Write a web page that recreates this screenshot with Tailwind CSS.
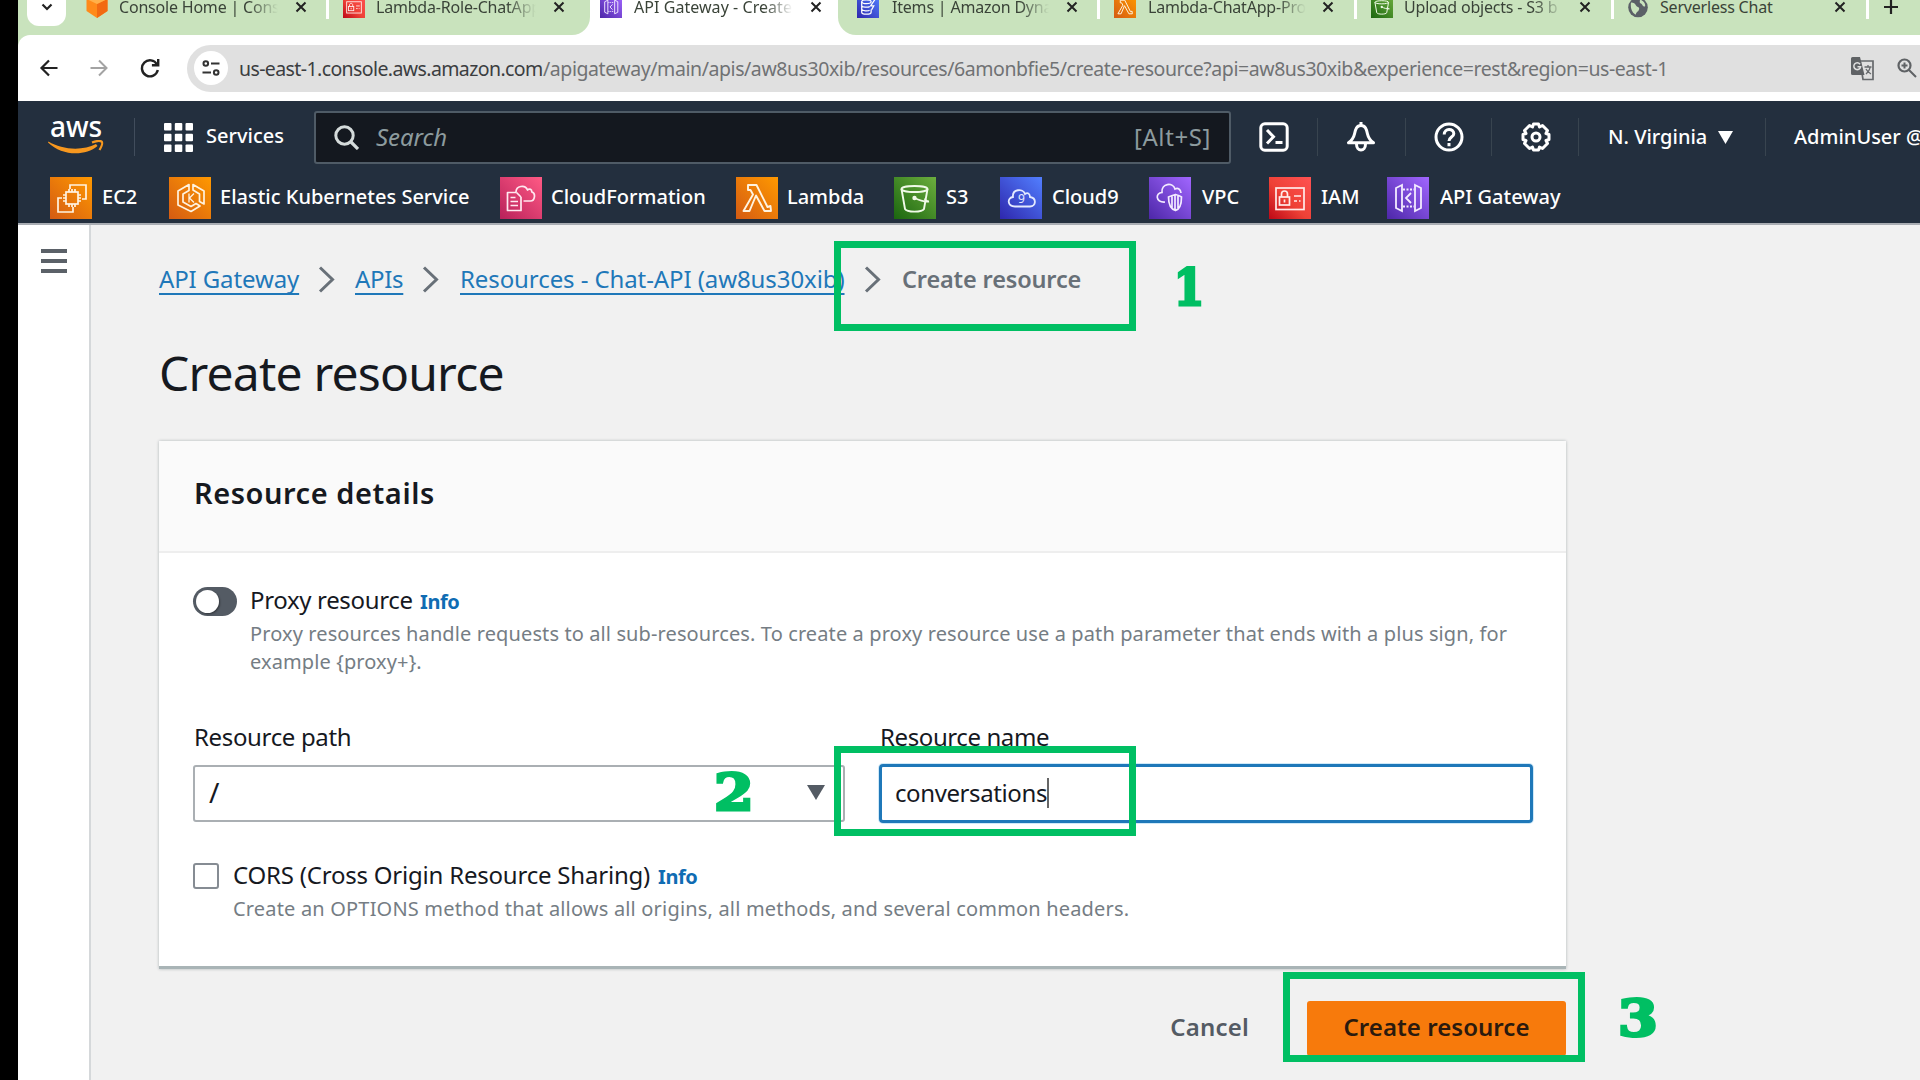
<!DOCTYPE html>
<html lang="en">
<head>
<meta charset="utf-8">
<title>API Gateway - Create resource</title>
<script src="https://cdn.jsdelivr.net/npm/@tailwindcss/browser@4"></script>
</head>
<body class="relative h-[1080px] w-[1920px] overflow-hidden bg-black pl-[18px] font-['Noto_Sans',sans-serif] text-[#16191f]">

<!-- Icon library -->
<svg class="absolute size-0" xmlns="http://www.w3.org/2000/svg">
  <defs>
    <linearGradient id="gOrange" x1="0" y1="1" x2="1" y2="0"><stop offset="0" stop-color="#d45b13"/><stop offset="1" stop-color="#ff9900"/></linearGradient>
    <linearGradient id="gPink" x1="0" y1="1" x2="1" y2="0"><stop offset="0" stop-color="#b8215a"/><stop offset="1" stop-color="#ff5a85"/></linearGradient>
    <linearGradient id="gGreen" x1="0" y1="1" x2="1" y2="0"><stop offset="0" stop-color="#1b660f"/><stop offset="1" stop-color="#6cae3e"/></linearGradient>
    <linearGradient id="gBlue" x1="0" y1="1" x2="1" y2="0"><stop offset="0" stop-color="#2e27ad"/><stop offset="1" stop-color="#527fff"/></linearGradient>
    <linearGradient id="gPurple" x1="0" y1="1" x2="1" y2="0"><stop offset="0" stop-color="#4d27a8"/><stop offset="1" stop-color="#a166ff"/></linearGradient>
    <linearGradient id="gRed" x1="0" y1="1" x2="1" y2="0"><stop offset="0" stop-color="#bd0816"/><stop offset=".45" stop-color="#ee4136"/><stop offset="1" stop-color="#ff5252"/></linearGradient>
  </defs>
  <symbol id="ec2" viewBox="0 0 42 42"><rect width="42" height="42" fill="url(#gOrange)"/><g fill="none" stroke="#fff3e0" stroke-width="1.7"><path d="M20 12V8h16v14h-4M12 21H8v14h15v-5"/><rect x="16" y="15" width="12" height="12"/><path d="M19 15v-3M22 15v-3M25 15v-3M19 27v3M22 27v3M25 27v3M16 18h-3M16 21h-3M16 24h-3M28 18h3M28 21h3M28 24h3"/></g></symbol>
  <symbol id="eks" viewBox="0 0 42 42"><rect width="42" height="42" fill="url(#gOrange)"/><g fill="none" stroke="#fff3e0" stroke-width="1.7" stroke-linejoin="round"><path d="M20 7.500L9 14v14l13 6.500 9-5.500-4-2.500-5 3-8-4.500v-8l6-3.500zM24 7.500L35 14v13l-4.500-2.500V17L24 13z"/><path d="M20 16.500v9M25 16.500l-4.500 4.500 4.500 4.500" stroke-width="1.300"/></g></symbol>
  <symbol id="cfn" viewBox="0 0 42 42"><rect width="42" height="42" fill="url(#gPink)"/><g fill="none" stroke="#ffe9f0" stroke-width="1.700" stroke-linejoin="round"><path d="M16.500 15.500H7.500v18h13.500V20M16.500 15.500l4.500 4.500M10.500 20.500h5M10.500 24.500h7.500M10.500 28.500h7.500M16 15c0-6 9-8 11.500-2 2-2 4.500-.5 4.300 2 4.200 1 3.200 9-1.300 9h-7"/></g></symbol>
  <symbol id="lambda" viewBox="0 0 42 42"><rect width="42" height="42" fill="url(#gOrange)"/><path d="M12 8h8.500l11 22 3-1 .5 5h-6.500L20 18.500 13.500 34H7.500L17 17.500 14.500 13H12z" fill="none" stroke="#fff3e0" stroke-width="1.900" stroke-linejoin="round"/></symbol>
  <symbol id="s3" viewBox="0 0 42 42"><rect width="42" height="42" fill="url(#gGreen)"/><g fill="none" stroke="#f0fae8" stroke-width="1.900"><ellipse cx="20.500" cy="12" rx="13" ry="3"/><path d="M7.500 12l3.500 20c2 3.500 17 3.500 19 0l3.500-20M20.500 21c4 2 10 4 14.500 3.500-2 0-3.500-2-4.500-3"/></g><circle cx="20.500" cy="21" r="2.200" fill="#f0fae8"/></symbol>
  <symbol id="cloud9" viewBox="0 0 42 42"><rect width="42" height="42" fill="url(#gBlue)"/><path d="M15 29.500c-8 0-8-9-2-9.500-1-8 10-9 12-3 3-2 5 0 5 3 7 1 6 9.500 0 9.500z" fill="none" stroke="#e4eaff" stroke-width="1.800"/><text x="21.500" y="26" font-size="12" font-weight="400" text-anchor="middle" fill="#e4eaff">9</text></symbol>
  <symbol id="vpc" viewBox="0 0 42 42"><rect width="42" height="42" fill="url(#gPurple)"/><g fill="none" stroke="#f3ebff" stroke-width="1.700"><path d="M16 25c-9.500.5-10-9-3-9.500C12 6 24 5 26 12c3-1.500 5.500 0 6 4"/><path d="M19.500 20c3-1.500 5-2 7-2.500 2 .5 4 1 6 2.500 0 7-1 12-6 13.500-5-1.500-7-6.500-7-13.500zM26 17.500V33M29 19v12M23 19v12"/></g></symbol>
  <symbol id="iam" viewBox="0 0 42 42"><rect width="42" height="42" fill="url(#gRed)"/><g fill="none" stroke="#ffecea" stroke-width="1.700"><rect x="7" y="11" width="28" height="21.500"/><rect x="10.500" y="20" width="10" height="8"/><path d="M12.500 20v-3c0-4 6-4 6 0v3M15.500 22.500v3M25 19h7M25 24h3M30 24h1.500"/></g></symbol>
  <symbol id="apigw" viewBox="0 0 42 42"><rect width="42" height="42" fill="url(#gPurple)"/><g fill="none" stroke="#f3ebff" stroke-width="1.800"><path d="M15 8l-6 3v20l6 3zM28 8l6 3v20l-6 3zM24 16l-5 5 5 5"/><path d="M16 12.500h11M16 29.500h11" stroke-dasharray="2 1.500"/></g></symbol>
  <symbol id="dynamo" viewBox="0 0 42 42"><rect width="42" height="42" fill="url(#gBlue)"/><g fill="none" stroke="#fff" stroke-width="2.400"><ellipse cx="18" cy="11" rx="9" ry="3.500"/><path d="M9 11v20c0 5 18 5 18 0v-5M9 18c0 4 13 4 15 2M9 25c0 4 13 4 15 2M34 7l-8 12h6l-4 7"/></g></symbol>
  <symbol id="close" viewBox="0 0 14 14"><path d="M2.500 2.500l9 9M11.500 2.500l-9 9" stroke="#222" stroke-width="2" fill="none"/></symbol>
  <symbol id="chev" viewBox="0 0 17 27"><path d="M2 1.500l12.500 12L2 25.500" fill="none" stroke="#687078" stroke-width="3"/></symbol>
</svg>

<div class="flex h-full w-[1902px] flex-col overflow-hidden bg-white">

  <!-- Browser tab strip -->
  <div class="relative h-[35px] shrink-0 bg-[#c9e3bd]">
    <div class="absolute left-[552px] top-0 h-[35px] w-[286px] bg-white"></div>
    <div class="absolute left-[522px] top-0 h-[35px] w-[50px] rounded-br-[18px] bg-[#c9e3bd]"></div>
    <div class="absolute left-[820px] top-0 h-[35px] w-[60px] rounded-bl-[18px] bg-[#c9e3bd]"></div>
    <div class="relative flex h-[14px] items-center whitespace-nowrap text-[16px] leading-[14px] tracking-[-0.2px] text-[#3a4338]">
      <div class="ml-[9px] mr-[6px] flex h-[38px] w-[39px] shrink-0 items-center justify-center rounded-[12px] bg-white"><svg class="h-[10px] w-[12px]" viewBox="0 0 12 10"><path d="M1.500 2.500L6 7l4.500-4.500" fill="none" stroke="#222" stroke-width="2.200"/></svg></div>
      <div class="flex w-[257px] shrink-0 items-center pl-[14px]">
        <svg class="h-[24px] w-[22px] shrink-0 -translate-y-px" viewBox="0 0 22 24"><path d="M11 0l10.500 5v12L11 24 .5 17V5z" fill="#ff8a1a"/><path d="M11 10l10.500-5v12L11 24z" fill="#f26a12"/><path d="M11 0l10.500 5L11 10 .5 5z" fill="#ffb04a"/></svg>
        <span class="ml-[11px] w-[160px] overflow-hidden py-1 [mask-image:linear-gradient(to_right,black_82%,transparent)]">Console Home | Cons</span>
        <svg class="ml-[16px] size-[14px] shrink-0"><use href="#close"/></svg>
        <i class="ml-[18px] h-[24px] w-[3px] shrink-0 bg-white"></i>
      </div>
      <div class="flex w-[257px] shrink-0 items-center pl-[14px]">
        <svg class="size-[22px] shrink-0"><use href="#iam"/></svg>
        <span class="ml-[11px] w-[160px] overflow-hidden py-1 [mask-image:linear-gradient(to_right,black_82%,transparent)]">Lambda-Role-ChatApp</span>
        <svg class="ml-[16px] size-[14px] shrink-0"><use href="#close"/></svg>
      </div>
      <div class="flex w-[257px] shrink-0 items-center pl-[14px]">
        <svg class="size-[22px] shrink-0"><use href="#apigw"/></svg>
        <span class="ml-[12px] w-[159px] overflow-hidden py-1 tracking-[0.050px] [mask-image:linear-gradient(to_right,black_82%,transparent)]">API Gateway - Create r</span>
        <svg class="ml-[16px] size-[14px] shrink-0"><use href="#close"/></svg>
      </div>
      <div class="flex w-[257px] shrink-0 items-center pl-[14px]">
        <svg class="size-[22px] shrink-0"><use href="#dynamo"/></svg>
        <span class="ml-[13px] w-[158px] overflow-hidden py-1 [mask-image:linear-gradient(to_right,black_82%,transparent)]">Items | Amazon Dynam</span>
        <svg class="ml-[16px] size-[14px] shrink-0"><use href="#close"/></svg>
        <i class="ml-[18px] h-[24px] w-[3px] shrink-0 bg-white"></i>
      </div>
      <div class="flex w-[257px] shrink-0 items-center pl-[14px]">
        <svg class="size-[22px] shrink-0"><use href="#lambda"/></svg>
        <span class="ml-[12px] w-[159px] overflow-hidden py-1 [mask-image:linear-gradient(to_right,black_82%,transparent)]">Lambda-ChatApp-Pro</span>
        <svg class="ml-[15px] size-[14px] shrink-0"><use href="#close"/></svg>
        <i class="ml-[19px] h-[24px] w-[3px] shrink-0 bg-white"></i>
      </div>
      <div class="flex w-[257px] shrink-0 items-center pl-[14px]">
        <svg class="size-[22px] shrink-0"><use href="#s3"/></svg>
        <span class="ml-[11px] w-[160px] overflow-hidden py-1 [mask-image:linear-gradient(to_right,black_82%,transparent)]">Upload objects - S3 b</span>
        <svg class="ml-[15px] size-[14px] shrink-0"><use href="#close"/></svg>
        <i class="ml-[19px] h-[24px] w-[3px] shrink-0 bg-white"></i>
      </div>
      <div class="flex w-[257px] shrink-0 items-center pl-[14px]">
        <svg class="h-[21px] w-[20px] shrink-0" viewBox="0 0 20 20"><circle cx="10" cy="10" r="9.800" fill="#5b6067"/><path d="M3 5c3 0 4 1 5 3s4 1 3 4-3 2-3 5c-3-1-6-5-5-12zM12 2c0 2-1 3 1 4s1 3 4 3c1-3-2-6-5-7z" fill="#c9e3bd"/></svg>
        <span class="ml-[12px] w-[161px] py-1">Serverless Chat</span>
        <svg class="ml-[12px] size-[14px] shrink-0"><use href="#close"/></svg>
        <i class="ml-[19px] h-[24px] w-[3px] shrink-0 bg-white"></i>
      </div>
      <svg class="ml-[12px] size-[16px] shrink-0" viewBox="0 0 16 16"><path d="M8 1v14M1 8h14" stroke="#222" stroke-width="2.200"/></svg>
    </div>
  </div>

  <!-- Browser toolbar -->
  <div class="flex h-[66px] shrink-0 items-center bg-[linear-gradient(#c9e3bd,#c9e3bd)] bg-[length:14px_14px] bg-no-repeat">
    <div class="flex h-[66px] flex-1 items-center rounded-tl-[12px] bg-white">
    <svg class="ml-[21px] size-[20px] shrink-0" viewBox="0 0 20 20"><path d="M18.500 10H2.500M10 2.500L2.500 10l7.500 7.500" fill="none" stroke="#222" stroke-width="2.200"/></svg>
    <svg class="ml-[30px] size-[20px] shrink-0" viewBox="0 0 20 20"><path d="M1.500 10h16M10 2.500l7.500 7.500-7.500 7.500" fill="none" stroke="#a3a3a3" stroke-width="2"/></svg>
    <svg class="ml-[31px] size-[20px] shrink-0" viewBox="0 0 20 20"><path d="M17 6.500A8 8 0 1 0 17.800 12M18.200 1v6.300h-6.300" fill="none" stroke="#222" stroke-width="2.400"/></svg>
    <div class="ml-[27px] flex h-[47px] flex-1 items-center rounded-l-full bg-[#e0e0e0] pl-[7px]">
      <div class="flex size-[34px] shrink-0 items-center justify-center rounded-full bg-white"><svg class="size-[18px]" viewBox="0 0 18 18" fill="none" stroke="#333" stroke-width="2"><circle cx="3.800" cy="4.500" r="2.300"/><path d="M9 4.500h8.500M.5 13.500H9"/><circle cx="14.200" cy="13.500" r="2.300"/></svg></div>
      <div class="ml-[11px] w-[1612px] shrink-0 translate-y-px whitespace-nowrap text-[19.500px] leading-[28px] text-[#707274]"><span class="inline-block w-[304px] tracking-[-0.600px] text-[#3b3d40]">us-east-1.console.aws.amazon.com</span><span class="tracking-[-0.430px]">/apigateway/main/apis/aw8us30xib/resources/6amonbfie5/create-resource?api=aw8us30xib&amp;experience=rest&amp;region=us-east-1</span></div>
      <svg class="h-[25px] w-[24px] shrink-0" viewBox="0 0 24 25"><path d="M9 5h13v18.500H12z" fill="none" stroke="#66696c" stroke-width="1.700"/><path d="M1.500 1H9l4.500 18h-12a1.500 1.500 0 0 1-1.500-1.500v-15A1.500 1.500 0 0 1 1.500 1z" fill="#5f6265"/><path d="M9 8.200a3.400 3.400 0 1 0 .6 2.600H6.500" fill="none" stroke="#e0e0e0" stroke-width="1.500"/><path d="M13.500 11h7M17 9v2M19 11c0 3-2 5-4 7M15 13c1 2 3 4 5 5" fill="none" stroke="#66696c" stroke-width="1.300"/></svg>
      <svg class="ml-[22px] size-[20px] shrink-0" viewBox="0 0 20 20"><circle cx="7.500" cy="7.500" r="6" fill="none" stroke="#5f6265" stroke-width="2.200"/><path d="M12 12l7 7M7.500 4.500v6M4.500 7.500h6" stroke="#5f6265" stroke-width="2"/></svg>
    </div>
    </div>
  </div>

  <!-- AWS header -->
  <header class="h-[122px] shrink-0 bg-[#232f3e] text-[20px] font-medium text-white">
    <div class="flex h-[72px] items-center whitespace-nowrap">
      <div class="ml-[30px] flex h-[72px] w-[56px] shrink-0 flex-col items-center pt-[11px]">
        <span class="text-[28px] leading-[28px]">aws</span>
        <svg class="h-[15px] w-[56px]" viewBox="0 0 56 15"><path d="M.5 1.500C14 10 35 11 48 4l1.500 2C37 16.500 14 16 0 2.500z" fill="#f7981f"/><path d="M44 2.500c4-1.500 8-2 9.500-1s0 5-2 8.500" fill="none" stroke="#f7981f" stroke-width="2.200"/></svg>
      </div>
      <i class="ml-[30px] h-[38px] w-px shrink-0 bg-[#414d5c]"></i>
      <svg class="ml-[29px] size-[29px] shrink-0" viewBox="0 0 29 29" fill="#fff"><rect width="7.500" height="7.500" rx="1"/><rect x="10.800" width="7.500" height="7.500" rx="1"/><rect x="21.500" width="7.500" height="7.500" rx="1"/><rect y="10.800" width="7.500" height="7.500" rx="1"/><rect x="10.800" y="10.800" width="7.500" height="7.500" rx="1"/><rect x="21.500" y="10.800" width="7.500" height="7.500" rx="1"/><rect y="21.500" width="7.500" height="7.500" rx="1"/><rect x="10.800" y="21.500" width="7.500" height="7.500" rx="1"/><rect x="21.500" y="21.500" width="7.500" height="7.500" rx="1"/></svg>
      <span class="ml-[13px] w-[80px] shrink-0 -translate-y-px">Services</span>
      <div class="ml-[28px] flex h-[53px] w-[917px] shrink-0 items-center rounded-[3px] border-2 border-[#4f5b66] bg-[#14181f] pl-[18px] pr-[18px] text-[24px] font-normal text-[#8d9b9e]">
        <svg class="size-[25px]" viewBox="0 0 25 25"><circle cx="10.500" cy="10.500" r="8.700" fill="none" stroke="#d5dbdb" stroke-width="3"/><path d="M17 17l7 7" stroke="#d5dbdb" stroke-width="3.200"/></svg>
        <span class="ml-[17px] flex-1 italic tracking-[-0.100px]">Search</span>
        <span class="tracking-[0.600px]">[Alt+S]</span>
      </div>
      <svg class="ml-[28px] size-[30px] shrink-0" viewBox="0 0 30 30" fill="none" stroke="#fff" stroke-width="3"><rect x="1.800" y="1.800" width="26.400" height="26.400" rx="4"/><path d="M8 8l6.500 6.800L8 21.500M16.500 20.500h7"/></svg>
      <i class="ml-[28px] h-[38px] w-px shrink-0 bg-[#38444f]"></i>
      <svg class="ml-[28px] size-[30px] shrink-0" viewBox="0 0 30 30" fill="none" stroke="#fff" stroke-width="3" stroke-linejoin="round"><path d="M15 0v3.500M15 3.500c-4.500 0-5.500 4-6.500 8.500S5 19 2.500 20.800h25C25 19 22.500 16.500 21.500 12S19.500 3.500 15 3.500zM10.500 22c0 8 9 8 9 0"/></svg>
      <i class="ml-[29px] h-[38px] w-px shrink-0 bg-[#38444f]"></i>
      <svg class="ml-[28px] size-[30px] shrink-0" viewBox="0 0 30 30" fill="none" stroke="#fff" stroke-width="3"><circle cx="15" cy="15" r="13"/><path d="M10.200 12.500c0-6.500 9.600-6.500 9.600-.8 0 3.500-4.800 3.300-4.800 7.300M15 21v3.200"/></svg>
      <i class="ml-[27px] h-[38px] w-px shrink-0 bg-[#38444f]"></i>
      <svg class="ml-[29px] size-[30px] shrink-0" viewBox="0 0 30 30" fill="none" stroke="#fff"><circle cx="15" cy="15" r="4" stroke-width="3"/><path stroke-width="3" stroke-linejoin="round" d="M12.500 2h5l1 3 3-1.500 5 5-1.500 3 3 1v5l-3 1 1.500 3-5 5-3-1.500-1 3h-5l-1-3-3 1.500-5-5 1.500-3-3-1v-5l3-1-1.500-3 5-5 3 1.500z"/></svg>
      <i class="ml-[27px] h-[38px] w-px shrink-0 bg-[#38444f]"></i>
      <span class="ml-[29px] w-[100px] shrink-0">N. Virginia</span>
      <svg class="ml-[10px] h-[13px] w-[15px] shrink-0" viewBox="0 0 15 13"><path d="M0 0h15L7.500 13z" fill="#fff"/></svg>
      <i class="ml-[32px] h-[38px] w-px shrink-0 bg-[#38444f]"></i>
      <span class="ml-[28px] shrink-0">AdminUser @</span>
    </div>
    <div class="flex h-[50px] items-start whitespace-nowrap pt-[4px] leading-[40px]">
      <svg class="ml-[32px] size-[42px] shrink-0"><use href="#ec2"/></svg><span class="ml-[10px] w-[67px] shrink-0">EC2</span>
      <svg class="size-[42px] shrink-0"><use href="#eks"/></svg><span class="ml-[9px] w-[280px] shrink-0">Elastic Kubernetes Service</span>
      <svg class="size-[42px] shrink-0"><use href="#cfn"/></svg><span class="ml-[9px] w-[185px] shrink-0">CloudFormation</span>
      <svg class="size-[42px] shrink-0"><use href="#lambda"/></svg><span class="ml-[9px] w-[107px] shrink-0">Lambda</span>
      <svg class="size-[42px] shrink-0"><use href="#s3"/></svg><span class="ml-[10px] w-[54px] shrink-0">S3</span>
      <svg class="size-[42px] shrink-0"><use href="#cloud9"/></svg><span class="ml-[10px] w-[97px] shrink-0">Cloud9</span>
      <svg class="size-[42px] shrink-0"><use href="#vpc"/></svg><span class="ml-[11px] w-[67px] shrink-0">VPC</span>
      <svg class="size-[42px] shrink-0"><use href="#iam"/></svg><span class="ml-[10px] w-[66px] shrink-0">IAM</span>
      <svg class="size-[42px] shrink-0"><use href="#apigw"/></svg><span class="ml-[11px] shrink-0">API Gateway</span>
    </div>
  </header>

  <div class="flex flex-1 border-t-2 border-[#a9adb3]">
    <!-- Collapsed side navigation -->
    <aside class="flex w-[73px] shrink-0 flex-col items-center gap-[6px] border-r-2 border-[#d5d8da] bg-white pt-[24px]">
      <i class="h-[4px] w-[26px] bg-[#5b6168]"></i><i class="h-[4px] w-[26px] bg-[#5b6168]"></i><i class="h-[4px] w-[26px] bg-[#5b6168]"></i>
    </aside>

    <main class="flex-1 bg-[#f1f1f1] pl-[68px]">
      <nav class="mt-[38px] flex h-[32px] items-center whitespace-nowrap text-[24px] leading-[32px] text-[#1f78b9]">
        <a class="w-[140px] tracking-[-0.120px] underline decoration-2 underline-offset-[5px] [text-decoration-skip-ink:none]">API Gateway</a>
        <svg class="ml-[19px] h-[27px] w-[17px]"><use href="#chev"/></svg>
        <a class="ml-[20px] w-[47px] tracking-[-0.300px] underline decoration-2 underline-offset-[5px] [text-decoration-skip-ink:none]">APIs</a>
        <svg class="ml-[20px] h-[27px] w-[17px]"><use href="#chev"/></svg>
        <a class="ml-[21px] w-[385px] tracking-[-0.090px] underline decoration-2 underline-offset-[5px] [text-decoration-skip-ink:none]">Resources - Chat-API (aw8us30xib)</a>
        <svg class="ml-[19px] h-[27px] w-[17px]"><use href="#chev"/></svg>
        <span class="ml-[21px] text-[23.500px] font-semibold tracking-[-0.150px] text-[#687078]">Create resource</span>
      </nav>

      <h1 class="mt-[50px] h-[56px] text-[48px] leading-[56px] tracking-[-0.800px]">Create resource</h1>

      <section class="mt-[40px] h-[528px] w-[1407px] border-b-[3px] border-[#a9b4b6] bg-white shadow-[0_0_3px_rgba(0,28,36,0.28)]">
        <div class="flex h-[112px] items-center border-b-2 border-[#eeeeee] bg-[#fafafa] pb-[7px] pl-[35px]">
          <h2 class="text-[29px] font-semibold leading-[36px] tracking-[0.550px]">Resource details</h2>
        </div>
        <div class="pl-[34px] pr-[33px] pt-[31px]">
          <div class="flex">
            <div class="mt-[3px] flex h-[29px] w-[44px] shrink-0 items-center rounded-full bg-[#545b64] pl-[3px]"><i class="size-[23px] rounded-full bg-white shadow-[1px_1px_2px_rgba(0,0,0,0.4)]"></i></div>
            <div class="ml-[13px] w-[1290px]">
              <div class="flex h-[32px] items-baseline whitespace-nowrap leading-[32px]"><span class="w-[170px] text-[24px] tracking-[-0.350px]">Proxy resource</span><span class="text-[20px] font-bold tracking-[-0.400px] text-[#0f6cb3]">Info</span></div>
              <p class="mt-[4px] whitespace-nowrap text-[20px] leading-[28px] tracking-[0.110px] text-[#757d84]">Proxy resources handle requests to all sub-resources. To create a proxy resource use a path parameter that ends with a plus sign, for<br>example {proxy+}.</p>
            </div>
          </div>
          <div class="mt-[45px] flex gap-[34px] text-[24px]">
            <div class="w-[652px]">
              <div class="h-[32px] whitespace-nowrap pl-px leading-[32px] tracking-[-0.350px]">Resource path</div>
              <div class="mt-[12px] flex h-[57px] items-center justify-between rounded-[3px] border-2 border-[#aaafb3] pb-[3px] pl-[14px] pr-[18px]"><span class="text-[28px] leading-[30px]">/</span><svg class="h-[15px] w-[18px]" viewBox="0 0 18 15"><path d="M0 0h18L9 15z" fill="#545b64"/></svg></div>
            </div>
            <div class="w-[654px]">
              <div class="h-[32px] whitespace-nowrap pl-px leading-[32px] tracking-[-0.400px]">Resource name</div>
              <div class="mt-[11px] flex h-[59px] items-center rounded-[4px] border-[3px] border-[#1f78b9] pb-[2px] pl-[13px] shadow-[0_0_0_1px_#cfe9f8]"><span class="leading-[32px] tracking-[-0.400px]">conversations</span><i class="h-[30px] w-[2px] bg-[#666]"></i></div>
            </div>
          </div>
          <div class="mt-[36px] flex">
            <i class="mt-[4px] size-[26px] shrink-0 rounded-[3px] border-2 border-[#868c93] bg-white"></i>
            <div class="ml-[14px]">
              <div class="flex h-[32px] items-baseline whitespace-nowrap leading-[32px]"><span class="w-[425px] text-[24px] tracking-[-0.210px]">CORS (Cross Origin Resource Sharing)</span><span class="text-[20px] font-bold tracking-[-0.400px] text-[#0f6cb3]">Info</span></div>
              <p class="mt-[4px] whitespace-nowrap text-[20px] leading-[28px] tracking-[0.180px] text-[#757d84]">Create an OPTIONS method that allows all origins, all methods, and several common headers.</p>
            </div>
          </div>
        </div>
      </section>

      <div class="mt-[32px] flex w-[1407px] items-center justify-end text-[24px] font-semibold leading-[32px]">
        <span class="mr-[58px] pb-[3px] tracking-[0.200px] text-[#545b64]">Cancel</span>
        <button class="flex h-[55px] w-[259px] items-center justify-center whitespace-nowrap rounded-[3px] bg-[#f77a0c] pb-[3px] tracking-[0.050px] text-[#2b1a0e]">Create resource</button>
      </div>
    </main>
  </div>
</div>

<!-- Step annotations -->
<div class="absolute left-[834px] top-[241px] h-[90px] w-[302px] border-[7px] border-[#00bf63]"></div>
<div class="absolute left-[834px] top-[746px] h-[90px] w-[302px] border-[7px] border-[#00bf63]"></div>
<div class="absolute left-[1283px] top-[972px] h-[90px] w-[302px] border-[7px] border-[#00bf63]"></div>
<div class="absolute left-[1169px] top-[257px] w-[40px] scale-x-[0.86] text-center font-['DejaVu_Serif',serif] text-[51px] font-bold leading-[60px] text-[#00bf63] [-webkit-text-stroke:3px_#00bf63]">1</div>
<div class="absolute left-[714px] top-[762px] w-[40px] scale-x-[1.12] text-center font-['DejaVu_Serif',serif] text-[51px] font-bold leading-[60px] text-[#00bf63] [-webkit-text-stroke:3px_#00bf63]">2</div>
<div class="absolute left-[1618px] top-[988px] w-[40px] scale-x-[1.12] text-center font-['DejaVu_Serif',serif] text-[51px] font-bold leading-[60px] text-[#00bf63] [-webkit-text-stroke:3px_#00bf63]">3</div>
</body>
</html>
